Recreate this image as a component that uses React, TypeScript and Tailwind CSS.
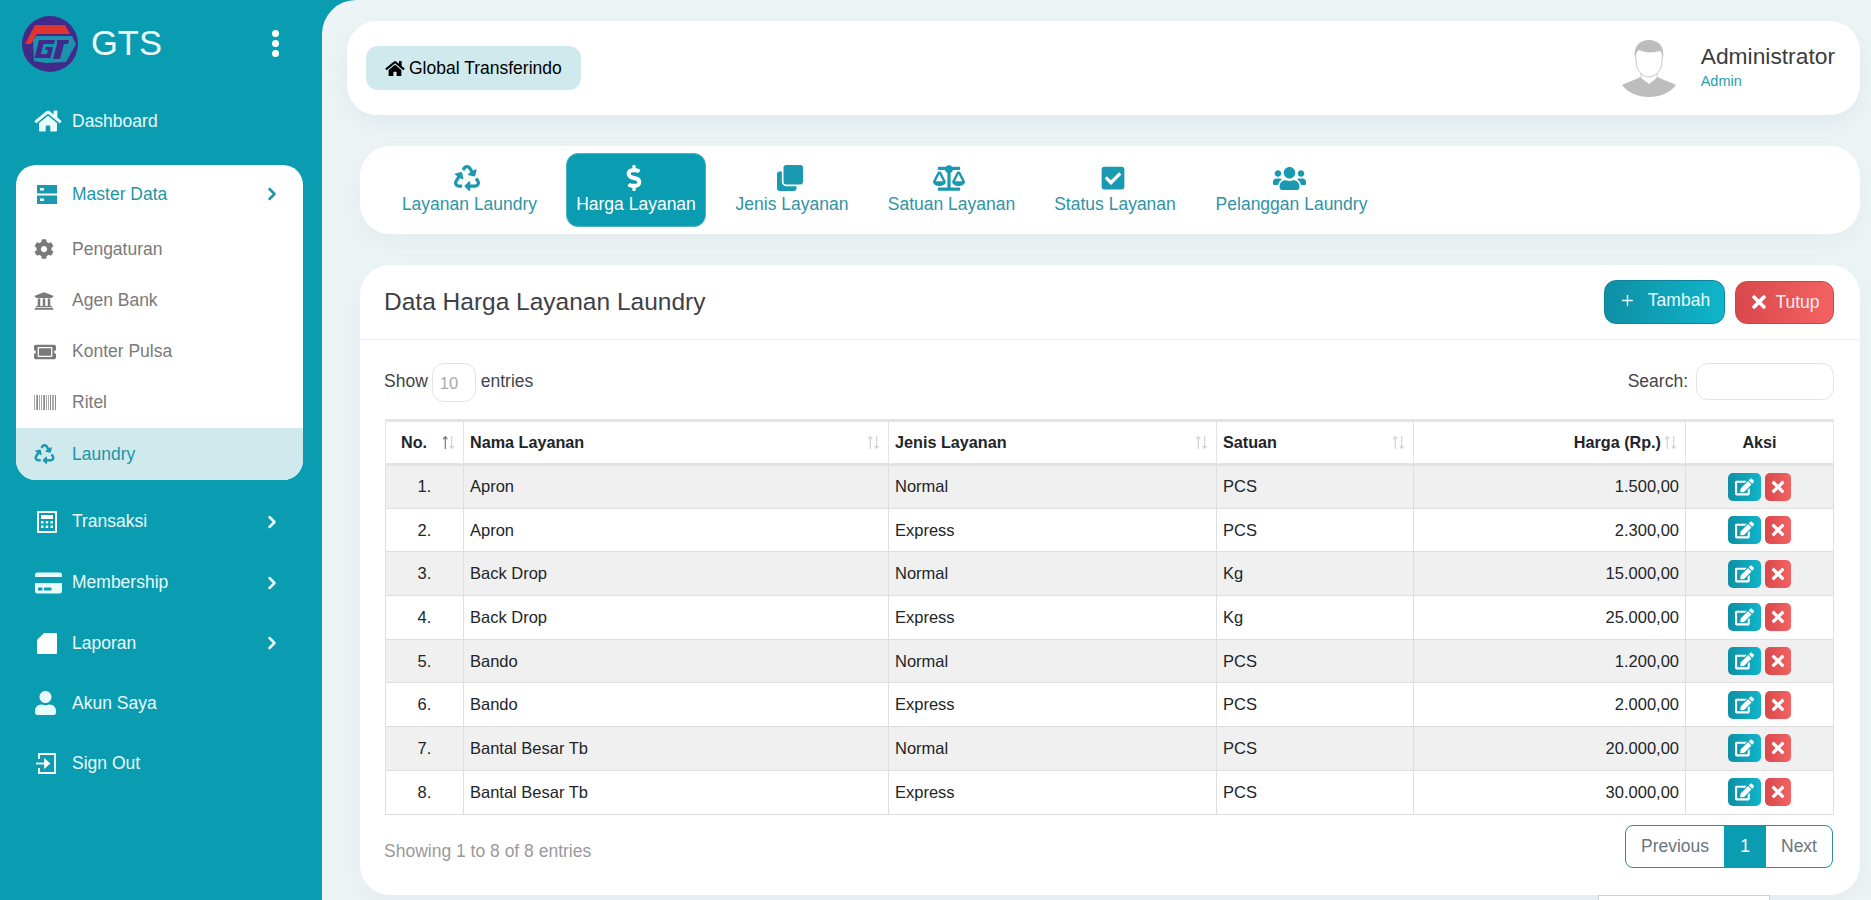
import { FaBalanceScale, FaCheckSquare, FaClone, FaCog, FaCreditCard, FaDollarSign, FaEdit, FaHome, FaRecycle, FaTicketAlt, FaTimes, FaUniversity, FaUser, FaUsers } from "react-icons/fa"
import { ChevronRight, Plus } from "lucide-react"
import type { ReactNode } from "react"

const rows = [
  { no: 1, name: "Apron", jenis: "Normal", satuan: "PCS", harga: "1.500,00" },
  { no: 2, name: "Apron", jenis: "Express", satuan: "PCS", harga: "2.300,00" },
  { no: 3, name: "Back Drop", jenis: "Normal", satuan: "Kg", harga: "15.000,00" },
  { no: 4, name: "Back Drop", jenis: "Express", satuan: "Kg", harga: "25.000,00" },
  { no: 5, name: "Bando", jenis: "Normal", satuan: "PCS", harga: "1.200,00" },
  { no: 6, name: "Bando", jenis: "Express", satuan: "PCS", harga: "2.000,00" },
  { no: 7, name: "Bantal Besar Tb", jenis: "Normal", satuan: "PCS", harga: "20.000,00" },
  { no: 8, name: "Bantal Besar Tb", jenis: "Express", satuan: "PCS", harga: "30.000,00" },
]

function Logo() {
  return (
    <svg viewBox="0 0 56 56" className="h-[56px] w-[56px]">
      <circle cx="28" cy="28" r="28" fill="#43298a" />
      <path d="M3 28 L13 9 L43 9 L48 18 L15 18 L9 28 Z" fill="#e0352f" />
      <path d="M11 24 L15 20 L50 20 L54 28 L44 46 L24 47 L12 45 Z" fill="#1b93ae" />
      <path d="M17 24 L33 24 L32 28 L21.5 28 L19 38 L25 38 L26 34 L23 34 L24 31 L31 31 L28.5 42 L12.5 42 Z" fill="#43298a" />
      <path d="M35 24 L47 24 L46 28 L42 28 L38 43 L31 43 L35 28 Z" fill="#43298a" />
    </svg>
  )
}

function Avatar() {
  return (
    <svg viewBox="0 0 54 57" className="h-[57px] w-[54px]">
      <path d="M0 45 C5 42 14 40 18 37 L27 44 L36 37 C40 40 49 42 54 45 C48 53 38 57 27 57 C16 57 6 53 0 45 Z" fill="#bdbdbd" />
      <path d="M13.5 14 L14.5 25 C15.5 32 22 37 27 37 C32 37 38.5 32 39.5 25 L40.5 14 M19 33 V38 M35 33 V38" fill="none" stroke="#c4c4c4" strokeWidth="0.9" />
      <path d="M13 18 C11 6 18 0 27 0 C36 0 43 6 41 18 C40.5 15 39.5 12 38 11 C32 13 22 13 17 10 C15 11 14 14 13 18 Z" fill="#bdbdbd" />
    </svg>
  )
}

function DrawerIcon() {
  return (
    <svg viewBox="0 0 20 19" className="h-[19px] w-[20px]">
      <path fillRule="evenodd" d="M0 0 H20 V8.5 H0 Z M3 3 V5.5 H7 V3 Z" fill="#1a9ab0" />
      <path fillRule="evenodd" d="M0 10.5 H20 V19 H0 Z M3 13.5 V16 H7 V13.5 Z" fill="#1a9ab0" />
    </svg>
  )
}

function CalculatorIcon() {
  return (
    <svg viewBox="0 0 20 22" className="h-[22px] w-[20px]" fill="#ffffff">
      <path fillRule="evenodd" d="M1 0 H19 a1 1 0 0 1 1 1 V21 a1 1 0 0 1 -1 1 H1 a1 1 0 0 1 -1 -1 V1 a1 1 0 0 1 1 -1 Z M2 2 V20 H18 V2 Z" />
      <rect x="4" y="4" width="12" height="4" />
      <rect x="4" y="10" width="2.5" height="2.5" />
      <rect x="8.7" y="10" width="2.5" height="2.5" />
      <rect x="13.5" y="10" width="2.5" height="2.5" />
      <rect x="4" y="14.5" width="2.5" height="2.5" />
      <rect x="8.7" y="14.5" width="2.5" height="2.5" />
      <rect x="13.5" y="14.5" width="2.5" height="2.5" />
    </svg>
  )
}

function FileIcon() {
  return (
    <svg viewBox="0 0 20 21" className="h-[21px] w-[20px]" fill="#ffffff">
      <path d="M7 0 H19 a1 1 0 0 1 1 1 V20 a1 1 0 0 1 -1 1 H1 a1 1 0 0 1 -1 -1 V7 Z" />
    </svg>
  )
}

function SignOutIcon() {
  return (
    <svg viewBox="0 0 20 21" className="h-[21px] w-[20px]" fill="none" stroke="#ffffff" strokeWidth="1.8">
      <path d="M3 6 V1 H19 V20 H3 V15" />
      <path d="M0 10.5 H9" />
      <path d="M9 7 L13 10.5 L9 14 Z" fill="#ffffff" />
    </svg>
  )
}

function BarcodeIcon() {
  const bars = [1, 1, 2, 1, 1, 1, 2, 1, 1, 2, 1, 1, 2]
  return (
    <div className="flex h-[15px] w-[22px] gap-px">
      {bars.map((w, i) => (
        <span key={i} className={w === 2 ? "h-full w-[1.5px] bg-[#888]" : "h-full w-[0.8px] bg-[#aaa]"} />
      ))}
    </div>
  )
}

function SortArrows({ dark }: { dark?: boolean }) {
  return (
    <svg viewBox="0 0 12 14" className="ml-auto h-[15px] w-[13px] shrink-0" fill="none" strokeWidth="1">
      <path d="M3 13 V1.5 M1 4 L3 1.5 L5 4" stroke={dark ? "#666666" : "#cfcfcf"} />
      <path d="M9 1 V12.5 M7 10 L9 12.5 L11 10" stroke="#cfcfcf" />
    </svg>
  )
}

function SideItem({ icon, label, arrow, className }: { icon: ReactNode; label: string; arrow?: boolean; className?: string }) {
  return (
    <div className={"flex items-center pl-[34px] text-[17.5px] text-[#e8fbfd] " + (className ?? "")}>
      <span className="flex w-[38px] items-center">{icon}</span>
      <span>{label}</span>
      {arrow && <ChevronRight className="absolute left-[262px] h-[20px] w-[20px]" strokeWidth={3} />}
    </div>
  )
}

function SubItem({ icon, label, active, className }: { icon: ReactNode; label: string; active?: boolean; className?: string }) {
  return (
    <div className={"flex items-center pl-[18px] text-[17.5px] " + (active ? "bg-[#cfe9ed] text-[#1d95a8] " : "text-[#7a7a7a] ") + (className ?? "h-[51px]")}>
      <span className="flex w-[38px] items-center">{icon}</span>
      <span>{label}</span>
    </div>
  )
}

function Tab({ icon, label, active, className }: { icon: ReactNode; label: string; active?: boolean; className?: string }) {
  return (
    <div className={"flex h-[74px] shrink-0 flex-col items-center justify-center whitespace-nowrap rounded-[12px] text-[17.5px] leading-[24px] " + (active ? "border border-[#4fb3c2] bg-[#0a9cb0] text-white " : "text-[#2f94a6] ") + (className ?? "")}>
      <span className={"mr-[5px] flex h-[27px] items-center " + (active ? "text-white" : "text-[#1a9ab0]")}>{icon}</span>
      <span>{label}</span>
    </div>
  )
}

export default function App() {
  return (
    <div className="flex h-[900px] w-[1871px] overflow-hidden bg-[#0a9cb0] font-['Liberation_Sans',Arial,sans-serif]">
      {/* sidebar */}
      <aside className="relative w-[322px] shrink-0 text-white">
        <div className="flex h-[86px] items-center pl-[22px] pt-[1px]">
          <Logo />
          <span className="ml-[13px] text-[34.5px] leading-none text-[#eefcfe]">GTS</span>
          <span className="ml-[110px] flex flex-col gap-[3px]">
            <span className="h-[7px] w-[7px] rounded-full bg-white" />
            <span className="h-[7px] w-[7px] rounded-full bg-white" />
            <span className="h-[7px] w-[7px] rounded-full bg-white" />
          </span>
        </div>
        <SideItem className="mt-[14px] h-[42px]" icon={<FaHome className="h-[24px] w-[28px]" />} label="Dashboard" />
        <div className="ml-[16px] mt-[23px] h-[315px] w-[287px] overflow-hidden rounded-[20px] bg-white">
          <div className="relative flex h-[58px] items-center pl-[21px] text-[17.5px] text-[#1f95a8]">
            <span className="flex w-[35px] items-center"><DrawerIcon /></span>
            <span>Master Data</span>
            <ChevronRight className="absolute left-[246px] h-[20px] w-[20px]" strokeWidth={3} />
          </div>
          <SubItem className="h-[52px]" icon={<FaCog className="h-[20px] w-[20px]" />} label="Pengaturan" />
          <SubItem icon={<FaUniversity className="h-[20px] w-[20px]" />} label="Agen Bank" />
          <SubItem icon={<FaTicketAlt className="h-[20px] w-[22px]" />} label="Konter Pulsa" />
          <SubItem icon={<BarcodeIcon />} label="Ritel" />
          <SubItem active className="h-[52px]" icon={<FaRecycle className="h-[20px] w-[21px] text-[#1a9ab0]" />} label="Laundry" />
        </div>
        <SideItem arrow className="relative mt-[11px] h-[61px]" icon={<span className="pl-[3px]"><CalculatorIcon /></span>} label="Transaksi" />
        <SideItem arrow className="relative h-[61px]" icon={<FaCreditCard className="h-[24px] w-[29px]" />} label="Membership" />
        <SideItem arrow className="relative h-[60px]" icon={<span className="pl-[3px]"><FileIcon /></span>} label="Laporan" />
        <SideItem className="h-[60px]" icon={<FaUser className="h-[24px] w-[23px]" />} label="Akun Saya" />
        <SideItem className="h-[60px]" icon={<span className="pl-[2px]"><SignOutIcon /></span>} label="Sign Out" />
      </aside>

      {/* main */}
      <main className="flex-1 rounded-tl-[34px] bg-[#edf4f6] pl-[25px] pr-[12px] pt-[21px]">
        <header className="flex h-[94px] items-center justify-between rounded-[30px] bg-white pl-[19px] pr-[25px] shadow-[0_8px_24px_rgba(60,100,120,0.08)]">
          <div className="flex h-[44px] w-[215px] items-center gap-[4px] rounded-[12px] bg-[#cfe9ed] pl-[19px] text-[17.5px] text-black">
            <FaHome className="h-[17px] w-[20px]" />
            <span>Global Transferindo</span>
          </div>
          <div className="flex items-center gap-[25px]">
            <Avatar />
            <div className="-mt-[6px] flex flex-col">
              <span className="text-[22.8px] leading-[28px] text-[#3c3c3c]">Administrator</span>
              <span className="mt-[3px] text-[14.5px] leading-[16px] text-[#2a9dae]">Admin</span>
            </div>
          </div>
        </header>

        <div className="ml-[13px] mt-[31px]">
          <nav className="flex h-[88px] items-center rounded-[30px] bg-white pl-[42px] shadow-[0_8px_24px_rgba(60,100,120,0.06)]">
            <Tab className="w-[135px]" icon={<FaRecycle className="text-[26px]" />} label="Layanan Laundry" />
            <Tab active className="ml-[29px] w-[140px]" icon={<FaDollarSign className="text-[26px]" />} label="Harga Layanan" />
            <Tab className="ml-[30px] w-[112px]" icon={<FaClone className="text-[26px]" />} label="Jenis Layanan" />
            <Tab className="ml-[40px] w-[127px]" icon={<FaBalanceScale className="text-[32px]" />} label="Satuan Layanan" />
            <Tab className="ml-[40px] w-[120px]" icon={<FaCheckSquare className="text-[26px]" />} label="Status Layanan" />
            <Tab className="ml-[41px] w-[151px]" icon={<FaUsers className="text-[33px]" />} label="Pelanggan Laundry" />
          </nav>

          <section className="mt-[31px] h-[630px] rounded-[30px] bg-white shadow-[0_8px_24px_rgba(60,100,120,0.06)]">
            <div className="flex h-[75px] items-center justify-between border-b border-[#eeeeee] pl-[24px] pr-[26px]">
              <h2 className="text-[24.5px] text-[#3f3f46]">Data Harga Layanan Laundry</h2>
              <div className="flex items-center gap-[10px]">
                <button className="flex h-[44px] w-[121px] items-center justify-center gap-[12px] rounded-[12px] border border-[#0e8497] bg-gradient-to-r from-[#0e8fa4] to-[#10b5cb] pb-[3px] text-[17.5px] text-[#e6fbfe]">
                  <Plus className="h-[17px] w-[17px]" strokeWidth={2} />
                  <span>Tambah</span>
                </button>
                <button className="flex h-[43px] w-[99px] items-center justify-center gap-[6px] rounded-[12px] border border-[#c94446] bg-gradient-to-r from-[#d9484a] to-[#f46363] text-[17.5px] text-[#fdeeee]">
                  <FaTimes className="h-[20px] w-[20px] text-white" />
                  <span>Tutup</span>
                </button>
              </div>
            </div>

            <div className="pl-[25px] pr-[26px]">
              <div className="flex h-[79px] items-center justify-between pt-[4px] text-[17.5px] text-[#3f454a]">
                <div className="-ml-[1px] flex items-center">
                  <span>Show</span>
                  <span className="ml-[4px] mt-[2px] flex h-[39px] w-[44px] items-center rounded-[12px] border border-[#e4e4e4] pl-[7px] pt-[2px] text-[16.5px] text-[#aaaaaa]">10</span>
                  <span className="ml-[5px]">entries</span>
                </div>
                <div className="flex items-center gap-[8px]">
                  <span>Search:</span>
                  <span className="h-[37px] w-[138px] rounded-[12px] border border-[#e4e4e4]" />
                </div>
              </div>

              <table className="w-[1448px] table-fixed border-collapse text-[16.5px] text-[#212529]">
                <colgroup>
                  <col className="w-[78px]" />
                  <col className="w-[425px]" />
                  <col className="w-[328px]" />
                  <col className="w-[197px]" />
                  <col className="w-[272px]" />
                  <col className="w-[148px]" />
                </colgroup>
                <thead>
                  <tr className="h-[44px] border-x border-t-[3px] border-b-[3px] border-[#e2e3e5] text-[16.2px] font-bold">
                    <th className="border-r border-[#e2e3e5] pl-[15px] pr-[8px] text-left"><div className="flex items-center">No.<SortArrows dark /></div></th>
                    <th className="border-r border-[#e2e3e5] pl-[6px] pr-[8px] text-left"><div className="flex items-center">Nama Layanan<SortArrows /></div></th>
                    <th className="border-r border-[#e2e3e5] pl-[6px] pr-[8px] text-left"><div className="flex items-center">Jenis Layanan<SortArrows /></div></th>
                    <th className="border-r border-[#e2e3e5] pl-[6px] pr-[8px] text-left"><div className="flex items-center">Satuan<SortArrows /></div></th>
                    <th className="border-r border-[#e2e3e5] pr-[8px] text-right"><div className="flex items-center"><span className="ml-auto">Harga (Rp.)</span><span className="ml-[3px]"><SortArrows /></span></div></th>
                    <th className="border-r border-[#e2e3e5] text-center">Aksi</th>
                  </tr>
                </thead>
                <tbody>
                  {rows.map((r) => (
                    <tr key={r.no} className={"h-[43.7px] border border-[#dedede] " + (r.no % 2 === 1 ? "bg-[#f0f0f0]" : "bg-white")}>
                      <td className="border-r border-[#dedede] text-center">{r.no}.</td>
                      <td className="border-r border-[#dedede] pl-[6px]">{r.name}</td>
                      <td className="border-r border-[#dedede] pl-[6px]">{r.jenis}</td>
                      <td className="border-r border-[#dedede] pl-[6px]">{r.satuan}</td>
                      <td className="border-r border-[#dedede] pr-[6px] text-right">{r.harga}</td>
                      <td className="border-r border-[#dedede]">
                        <div className="flex items-center justify-center gap-[4px]">
                          <span className="flex h-[28px] w-[33px] items-center justify-center rounded-[5px] bg-gradient-to-r from-[#0e8fa4] to-[#10b5cb] text-white"><FaEdit className="h-[18px] w-[19px]" /></span>
                          <span className="flex h-[28px] w-[26px] items-center justify-center rounded-[5px] bg-gradient-to-r from-[#d9484a] to-[#f46363] text-white"><FaTimes className="h-[18px] w-[18px]" /></span>
                        </div>
                      </td>
                    </tr>
                  ))}
                </tbody>
              </table>

              <div className="mt-[10px] flex w-[1448px] items-start justify-between">
                <span className="-ml-[1px] mt-[13px] text-[17.5px] text-[#9a9a9a]">Showing 1 to 8 of 8 entries</span>
                <div className="flex h-[43px] items-stretch overflow-hidden rounded-[8px] border border-[#2a8ea0] text-[17.5px] text-[#6c757d]">
                  <span className="flex w-[98px] items-center justify-center">Previous</span>
                  <span className="flex w-[42px] items-center justify-center bg-[#0a9cb0] text-white">1</span>
                  <span className="flex w-[66px] items-center justify-center">Next</span>
                </div>
              </div>
            </div>
          </section>
          <div className="ml-[1238px] h-[20px] w-[172px] border border-[#cfcfcf] bg-white" />
        </div>
      </main>
    </div>
  )
}
